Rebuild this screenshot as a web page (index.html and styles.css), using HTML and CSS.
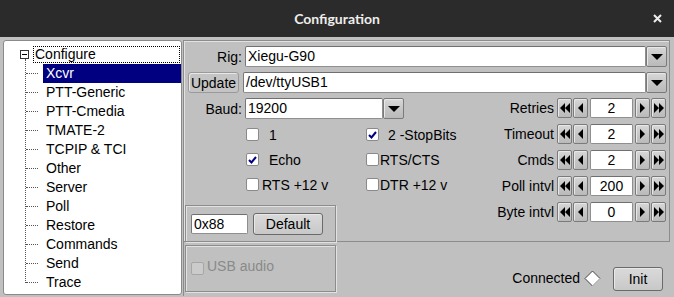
FILE: index.html
```html
<!DOCTYPE html>
<html lang="en">
<head>
<meta charset="UTF-8" />
<meta name="viewport" content="width=device-width, initial-scale=1" />
<title>Configuration</title>
<link rel="stylesheet" href="styles.css">
</head>
<body>
  <div class="titlebar">
    <span></span>
    <span class="title">Configuration</span>
    <svg class="close" width="9" height="9" viewBox="0 0 9 9"><path d="M1 1L8 8M8 1L1 8" stroke="#eeeeec" stroke-width="2"/></svg>
  </div>

  <div class="dialog">
    <div class="tree">
      <div class="tree-root">
        <svg class="toggle" width="9" height="9" viewBox="0 0 9 9"><rect x="0.5" y="0.5" width="8" height="8" fill="#fff" stroke="#333"/><path d="M2 4.5H7" stroke="#000"/></svg>
        <span class="root-label">Configure</span>
      </div>
      <ul class="tree-items">
        <li class="selected"><span>Xcvr</span></li>
        <li><span>PTT-Generic</span></li>
        <li><span>PTT-Cmedia</span></li>
        <li><span>TMATE-2</span></li>
        <li><span>TCPIP &amp; TCI</span></li>
        <li><span>Other</span></li>
        <li><span>Server</span></li>
        <li><span>Poll</span></li>
        <li><span>Restore</span></li>
        <li><span>Commands</span></li>
        <li><span>Send</span></li>
        <li><span>Trace</span></li>
      </ul>
    </div>

    <div class="main">
      <div class="panel">
        <div class="row row-rig">
          <label class="lbl">Rig:</label>
          <div class="field rig-field">Xiegu-G90</div>
          <div class="btn drop"><svg width="12" height="6" viewBox="0 0 12 6"><path d="M0 0H12L6 6Z" fill="#000"/></svg></div>
        </div>
        <div class="row row-port">
          <div class="btn update">Update</div>
          <div class="field port-field">/dev/ttyUSB1</div>
          <div class="btn drop"><svg width="12" height="6" viewBox="0 0 12 6"><path d="M0 0H12L6 6Z" fill="#000"/></svg></div>
        </div>

        <div class="lower">
          <div class="left">
            <div class="row">
              <label class="lbl">Baud:</label>
              <div class="field baud-field">19200</div>
              <div class="btn drop"><svg width="12" height="6" viewBox="0 0 12 6"><path d="M0 0H12L6 6Z" fill="#000"/></svg></div>
            </div>

            <div class="checks">
              <div class="chk"><span class="box"></span><span class="chk-label wide">1</span></div>
              <div class="chk"><span class="box on"><svg width="9" height="8" viewBox="0 0 9 8"><path d="M1 4L3.5 6.5L8 1" fill="none" stroke="#000080" stroke-width="2"/></svg></span><span class="chk-label mid">2 -StopBits</span></div>
              <div class="chk"><span class="box on"><svg width="9" height="8" viewBox="0 0 9 8"><path d="M1 4L3.5 6.5L8 1" fill="none" stroke="#000080" stroke-width="2"/></svg></span><span class="chk-label wide">Echo</span></div>
              <div class="chk"><span class="box"></span><span class="chk-label">RTS/CTS</span></div>
              <div class="chk"><span class="box"></span><span class="chk-label narrow">RTS +12 v</span></div>
              <div class="chk"><span class="box"></span><span class="chk-label">DTR +12 v</span></div>
            </div>

            <div class="frame hexbox">
              <div class="field hex-field">0x88</div>
              <div class="btn default">Default</div>
            </div>
          </div>

          <div class="spinners">
            <div class="spin-row">
              <span class="spin-label">Retries</span>
              <div class="btn arr"><svg width="10" height="10" viewBox="0 0 10 10"><path d="M0 5L5 0V10Z M5 5L10 0V10Z" fill="#000"/></svg></div>
              <div class="btn arr one"><svg width="5" height="10" viewBox="0 0 5 10"><path d="M0 5L5 0V10Z" fill="#000"/></svg></div>
              <div class="spin-val">2</div>
              <div class="btn arr"><svg width="5" height="10" viewBox="0 0 5 10"><path d="M5 5L0 0V10Z" fill="#000"/></svg></div>
              <div class="btn arr one"><svg width="10" height="10" viewBox="0 0 10 10"><path d="M10 5L5 0V10Z M5 5L0 0V10Z" fill="#000"/></svg></div>
            </div>
            <div class="spin-row">
              <span class="spin-label">Timeout</span>
              <div class="btn arr"><svg width="10" height="10" viewBox="0 0 10 10"><path d="M0 5L5 0V10Z M5 5L10 0V10Z" fill="#000"/></svg></div>
              <div class="btn arr one"><svg width="5" height="10" viewBox="0 0 5 10"><path d="M0 5L5 0V10Z" fill="#000"/></svg></div>
              <div class="spin-val">2</div>
              <div class="btn arr"><svg width="5" height="10" viewBox="0 0 5 10"><path d="M5 5L0 0V10Z" fill="#000"/></svg></div>
              <div class="btn arr one"><svg width="10" height="10" viewBox="0 0 10 10"><path d="M10 5L5 0V10Z M5 5L0 0V10Z" fill="#000"/></svg></div>
            </div>
            <div class="spin-row">
              <span class="spin-label">Cmds</span>
              <div class="btn arr"><svg width="10" height="10" viewBox="0 0 10 10"><path d="M0 5L5 0V10Z M5 5L10 0V10Z" fill="#000"/></svg></div>
              <div class="btn arr one"><svg width="5" height="10" viewBox="0 0 5 10"><path d="M0 5L5 0V10Z" fill="#000"/></svg></div>
              <div class="spin-val">2</div>
              <div class="btn arr"><svg width="5" height="10" viewBox="0 0 5 10"><path d="M5 5L0 0V10Z" fill="#000"/></svg></div>
              <div class="btn arr one"><svg width="10" height="10" viewBox="0 0 10 10"><path d="M10 5L5 0V10Z M5 5L0 0V10Z" fill="#000"/></svg></div>
            </div>
            <div class="spin-row">
              <span class="spin-label">Poll intvl</span>
              <div class="btn arr"><svg width="10" height="10" viewBox="0 0 10 10"><path d="M0 5L5 0V10Z M5 5L10 0V10Z" fill="#000"/></svg></div>
              <div class="btn arr one"><svg width="5" height="10" viewBox="0 0 5 10"><path d="M0 5L5 0V10Z" fill="#000"/></svg></div>
              <div class="spin-val">200</div>
              <div class="btn arr"><svg width="5" height="10" viewBox="0 0 5 10"><path d="M5 5L0 0V10Z" fill="#000"/></svg></div>
              <div class="btn arr one"><svg width="10" height="10" viewBox="0 0 10 10"><path d="M10 5L5 0V10Z M5 5L0 0V10Z" fill="#000"/></svg></div>
            </div>
            <div class="spin-row">
              <span class="spin-label">Byte intvl</span>
              <div class="btn arr"><svg width="10" height="10" viewBox="0 0 10 10"><path d="M0 5L5 0V10Z M5 5L10 0V10Z" fill="#000"/></svg></div>
              <div class="btn arr one"><svg width="5" height="10" viewBox="0 0 5 10"><path d="M0 5L5 0V10Z" fill="#000"/></svg></div>
              <div class="spin-val">0</div>
              <div class="btn arr"><svg width="5" height="10" viewBox="0 0 5 10"><path d="M5 5L0 0V10Z" fill="#000"/></svg></div>
              <div class="btn arr one"><svg width="10" height="10" viewBox="0 0 10 10"><path d="M10 5L5 0V10Z M5 5L0 0V10Z" fill="#000"/></svg></div>
            </div>
          </div>
        </div>
      </div>

      <div class="footer">
        <div class="frame usbbox">
          <span class="box disabled"></span><span class="usb-label">USB audio</span>
        </div>
        <div class="status">
          <span class="conn">Connected</span>
          <svg class="diamond" width="17" height="17" viewBox="0 0 17 17"><path d="M8.5 1L16 8.5L8.5 16L1 8.5Z" fill="#fff" stroke="#444"/><path d="M8.5 16L16 8.5" stroke="#e8e8e8"/></svg>
          <div class="btn init">Init</div>
        </div>
      </div>
    </div>
  </div>
</body>
</html>
```

FILE: styles.css
```css
* {
  margin: 0; padding: 0; box-sizing: border-box;
}
body {
  width: 674px;
  height: 297px;
  overflow: hidden;
  background: #c0c0c0;
  font-family: "Liberation Sans", Arial, sans-serif;
  font-size: 14px;
  color: #000;
}
/* title bar */
.titlebar {
  height: 37px;
  background: #2b2b2b;
  display: grid;
  grid-template-columns: 1fr auto 1fr;
  align-items: center;
}
.title {
  font-family: Lato, "Liberation Sans", sans-serif;
  font-weight: bold;
  font-size: 14px;
  color: #eeeeec;
}
.close {
  justify-self: end;
  margin-right: 12px;
}
.dialog {
  display: flex;
  padding: 3px 0 0 3px;
}
/* tree */
.tree {
  width: 179px;
  height: 255px;
  background: #fff;
  border: 1px solid #8a8a8a;
  border-radius: 3px;
}
.tree-root {
  display: flex;
  align-items: center;
  height: 17px;
  margin-top: 5px;
}
.toggle {
  margin-left: 16px;
  margin-right: 4px;
}
.root-label {
  flex: 1;
  height: 17px;
  line-height: 15px;
  padding-left: 1px;
  margin-right: 1px;
  border: 1px dotted #000;
}
.tree-items {
  list-style: none;
  margin: 1px 0 0 21px;
  position: relative;
}
.tree-items::before {
  content: "";
  position: absolute;
  left: 0; top: -5px; bottom: 9px;
  border-left: 1px dotted #555;
}
.tree-items li {
  position: relative;
  display: flex;
  height: 19px;
  padding-left: 18px;
}
.tree-items li::before {
  content: "";
  position: absolute;
  left: 1px; top: 9px;
  width: 12px;
  border-top: 1px dotted #555;
}
.tree-items li span {
  flex: 1;
  line-height: 19px;
  padding-left: 3px;
}
.tree-items li.selected span {
  background: #000080;
  color: #fff;
}
/* right side */
.main {
  margin-left: 1px;
  width: 487px;
  display: flex;
  flex-direction: column;
}
.panel {
  height: 202px;
  border: 1px solid #8c8c8c;
  box-shadow: inset 1px 1px 0 #e2e2e2;
}
.frame {
  border: 1px solid #8c8c8c;
  box-shadow: inset 1px 1px 0 #e2e2e2, 1px 1px 0 #e2e2e2;
}
.row {
  display: flex;
  height: 21px;
  align-items: center;
}
.row-rig { margin-top: 5px; }
.row-port { margin-top: 5px; }
.lbl {
  width: 58px;
  text-align: right;
}
.field {
  height: 21px;
  line-height: 19px;
  background: #fff;
  border: 1px solid #8f8f8f;
  border-top-color: #6f6f6f;
  border-left-color: #777;
  border-radius: 2px;
  padding-left: 2px;
  white-space: nowrap;
}
.rig-field { margin-left: 3px; width: 401px; }
.port-field { margin-left: 4px; width: 403px; }
.baud-field { margin-left: 3px; width: 138px; }
.btn {
  display: flex;
  align-items: center;
  justify-content: center;
  background: linear-gradient(#d8d8d8, #c6c6c6 50%, #bababa);
  border: 1px solid #7a7a7a;
  border-radius: 3px;
  box-shadow: inset 1px 1px 0 #e8e8e8;
}
.drop {
  width: 21px;
  height: 21px;
  border-radius: 2px;
}
.update {
  margin-left: 4px;
  width: 51px;
  height: 21px;
  background: #c4c4c4;
  border-color: #9a9a9a;
}
.lower {
  display: flex;
  margin-top: 5px;
}
.left {
  flex: none;
}
.checks {
  display: grid;
  grid-template-columns: 120px auto;
  grid-auto-rows: 25px;
  margin-top: 3px;
  padding-left: 62px;
}
.chk {
  display: flex;
  align-items: center;
}
.box {
  width: 13px;
  height: 13px;
  background: #fff;
  border: 1px solid #8a8a8a;
  border-radius: 2px;
  display: flex;
  align-items: center;
  justify-content: center;
}
.chk-label { margin-left: 1px; }
.chk-label.wide { margin-left: 10px; }
.chk-label.mid { margin-left: 9px; }
.chk-label.narrow { margin-left: 3px; }
.hexbox {
  display: flex;
  align-items: center;
  width: 151px;
  height: 37px;
  margin: 8px 0 0 1px;
  padding-left: 5px;
}
.hex-field {
  width: 57px;
  height: 20px;
  line-height: 18px;
}
.default {
  margin-left: 5px;
  width: 70px;
  height: 22px;
  background: linear-gradient(#dadada, #c8c8c8);
  border-color: #6a6a6a;
}
/* counters */
.spinners {
  margin-left: auto;
  margin-right: 3px;
  display: flex;
  flex-direction: column;
  gap: 6px;
}
.spin-row {
  display: flex;
  align-items: center;
  height: 20px;
}
.spin-label {
  width: 80px;
  margin-right: 3px;
  text-align: right;
}
.arr {
  width: 15px;
  height: 20px;
  border-radius: 2px;
}
.arr.one { margin-left: 1px; }
.spin-val {
  width: 43px;
  height: 20px;
  margin: 0 2px;
  line-height: 18px;
  text-align: center;
  background: #fff;
  border: 1px solid #8f8f8f;
  border-top-color: #6f6f6f;
  border-radius: 2px;
}
/* bottom */
.footer {
  height: 54px;
  display: flex;
  border-left: 1px solid #8c8c8c;
}
.usbbox {
  width: 151px;
  height: 47px;
  margin: 3px 0 0 1px;
  display: flex;
  align-items: flex-start;
  padding: 16px 0 0 5px;
}
.box.disabled {
  background: #cbcbcb;
  border-color: #a6a6a6;
}
.usb-label {
  margin-left: 3px;
  margin-top: -4px;
  color: #8a8a8a;
}
.status {
  margin-left: auto;
  margin-right: 7px;
  margin-bottom: 5px;
  align-self: flex-end;
  display: flex;
  align-items: center;
}
.conn {
  margin-top: -3px;
}
.diamond {
  margin-left: 4px;
  margin-top: -2px;
}
.init {
  margin-left: 12px;
  width: 50px;
  height: 24px;
  background: linear-gradient(#dadada, #c8c8c8);
  border-color: #6a6a6a;
}
```
